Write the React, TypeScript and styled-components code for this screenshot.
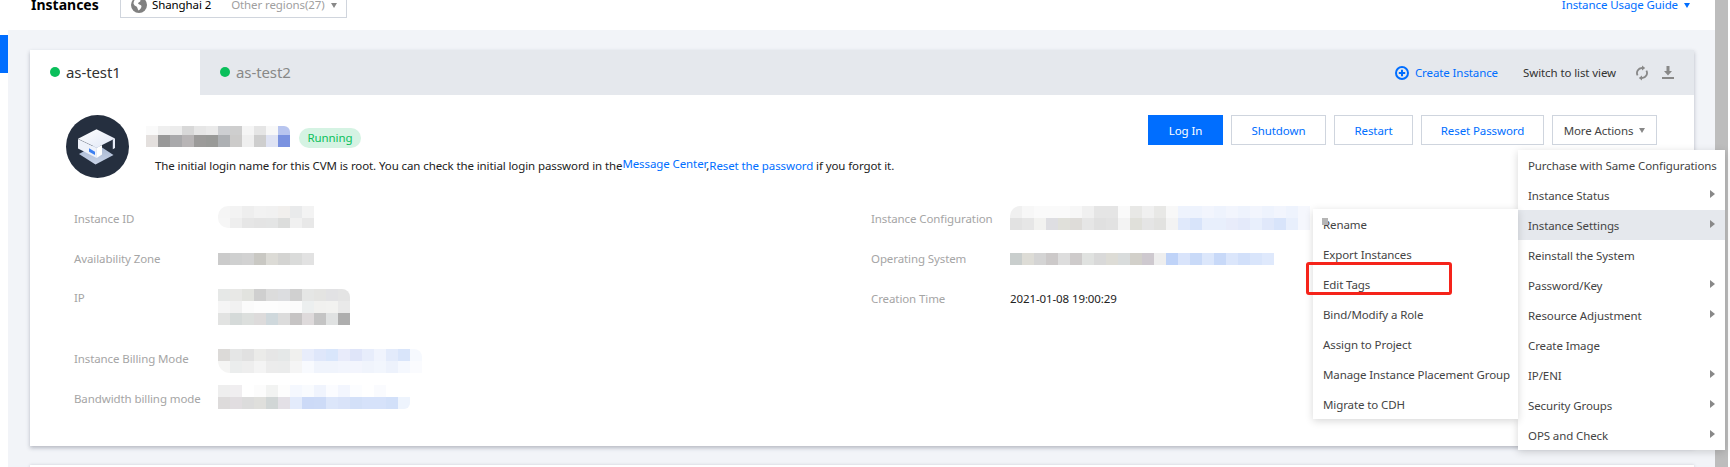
import React from 'react';
import styled, { createGlobalStyle } from 'styled-components';

const GlobalStyle = createGlobalStyle`
  html, body {
    margin: 0;
    padding: 0;
    background: #fff;
    overflow: hidden;
  }
  * {
    box-sizing: border-box;
  }
  body {
    font-family: "Noto Sans", "Open Sans", Arial, sans-serif;
    font-size: 11.5px;
    letter-spacing: -0.1px;
    color: #444;
  }
`;

const Page = styled.div`
  display: flex;
  width: 1730px;
  height: 467px;
  overflow: hidden;
  background: #fff;
`;

const Rail = styled.div`
  width: 8px;
  padding-top: 35px;
  flex-shrink: 0;
  background: #fff;
`;

const RailMarker = styled.div`
  height: 38px;
  background: #006eff;
`;

const Main = styled.div`
  width: 1707px;
  flex-shrink: 0;
  background: #f2f4f8;
`;

const ScrollBar = styled.div`
  width: 13px;
  flex-shrink: 0;
  background: #bdbdbd;
`;

const Header = styled.div`
  height: 30px;
  display: flex;
  align-items: flex-end;
  padding: 0 25px 11px 23px;
  background: #fff;
  overflow: hidden;
`;

const PageTitle = styled.div`
  width: 69px;
  font-size: 14px;
  font-weight: 700;
  letter-spacing: 0;
  line-height: 20px;
  color: #000;
  margin-bottom: 4px;
`;

const RegionBox = styled.div`
  width: 227px;
  height: 30px;
  margin-left: 20px;
  margin-bottom: 1px;
  padding: 4px 0 0 10px;
  display: flex;
  align-items: center;
  flex-shrink: 0;
  border: 1px solid #d0d5dd;
  line-height: 18px;
  white-space: nowrap;
`;

const RegionCurrent = styled.span`
  color: #000;
  margin-left: 5px;
`;

const RegionOther = styled.span`
  color: #a0a0a0;
  margin-left: 20px;
`;

const Caret = styled.span<{ $color?: string; $gap?: number }>`
  display: inline-block;
  width: 0;
  height: 0;
  margin-left: ${p => p.$gap ?? 6}px;
  border-left: 3.5px solid transparent;
  border-right: 3.5px solid transparent;
  border-top: 5px solid ${p => p.$color ?? '#888'};
`;

const GuideLink = styled.div`
  margin-left: auto;
  margin-bottom: 4px;
  display: flex;
  align-items: center;
  line-height: 20px;
  color: #006eff;
`;

const Content = styled.div`
  padding: 20px 21px 0 22px;
`;

const Card = styled.div`
  background: #fff;
  box-shadow: 0 2px 4px rgba(54, 58, 80, 0.32);
`;

const TabBar = styled.div`
  height: 45px;
  display: flex;
  align-items: center;
  padding-right: 20px;
  background: #e5e8ed;
`;

const Tab = styled.div<{ $active?: boolean }>`
  width: ${p => (p.$active ? '170px' : 'auto')};
  height: 45px;
  padding: 0 0 1px 20px;
  display: flex;
  align-items: center;
  gap: 6px;
  font-size: 15px;
  background: ${p => (p.$active ? '#fff' : 'transparent')};
  color: ${p => (p.$active ? '#333' : '#888')};
`;

const Dot = styled.span`
  width: 10px;
  height: 10px;
  border-radius: 50%;
  background: #0abf5b;
`;

const TabActions = styled.div`
  margin-left: auto;
  display: flex;
  align-items: center;
`;

const CreateLink = styled.span`
  display: flex;
  align-items: center;
  gap: 6px;
  color: #006eff;
`;

const SwitchLink = styled.span`
  margin-left: 25px;
  color: #333;
`;

const IconSlot = styled.span<{ $gap: number }>`
  display: flex;
  margin-left: ${p => p.$gap}px;
`;

const CardBody = styled.div`
  position: relative;
  height: 351px;
`;

const TopRow = styled.div`
  display: flex;
  justify-content: space-between;
  padding: 20px 37px 0 36px;
  height: 83px;
`;

const Identity = styled.div`
  display: flex;
  gap: 17px;
`;

const NameLine = styled.div`
  display: flex;
  align-items: center;
  gap: 9px;
  margin-top: 10px;
`;

const RunningPill = styled.span`
  width: 62px;
  height: 20px;
  margin-top: 3px;
  border-radius: 10px;
  background: #d5f3e3;
  color: #0abf5b;
  text-align: center;
  line-height: 20px;
`;

const LoginHint = styled.div`
  margin-top: 9px;
  padding-left: 9px;
  line-height: 18px;
  color: #222;
  white-space: nowrap;
`;

const HintLink = styled.a<{ $raised?: boolean }>`
  color: #006eff;
  position: relative;
  top: ${p => (p.$raised ? '-2px' : '0')};
`;

const Buttons = styled.div`
  display: flex;
  gap: 8px;
`;

const Button = styled.button<{ $primary?: boolean; $width: number; $plain?: boolean }>`
  width: ${p => p.$width}px;
  height: 30px;
  padding: 0;
  font: inherit;
  letter-spacing: inherit;
  display: flex;
  align-items: center;
  justify-content: center;
  border: 1px solid ${p => (p.$primary ? '#006eff' : '#cfd5de')};
  background: ${p => (p.$primary ? '#006eff' : '#fff')};
  color: ${p => (p.$primary ? '#fff' : p.$plain ? '#444' : '#006eff')};
`;

const Details = styled.div`
  display: grid;
  grid-template-columns: 797px 1fr;
  padding: 21px 0 0 44px;
`;

const DetailRow = styled.div<{ $tall?: boolean }>`
  height: ${p => (p.$tall ? '60px' : '40px')};
  padding-top: ${p => (p.$tall ? '10px' : '0')};
  display: flex;
  align-items: ${p => (p.$tall ? 'flex-start' : 'center')};
`;

const DetailLabel = styled.div<{ $width: number }>`
  width: ${p => p.$width}px;
  flex-shrink: 0;
  line-height: 18px;
  color: #a5a5a5;
  white-space: nowrap;
`;

const DetailValue = styled.div`
  color: #222;
  line-height: 18px;
`;

const MosaicBox = styled.svg<{ $shift?: number; $radius?: string }>`
  display: block;
  flex-shrink: 0;
  margin-top: ${p => p.$shift ?? 0}px;
  border-radius: ${p => p.$radius ?? '0'};
`;

const ActionsMenu = styled.div`
  position: absolute;
  top: 55px;
  right: -31px;
  width: 207px;
  background: #fff;
  box-shadow: 0 2px 8px rgba(0, 0, 0, 0.16);
  z-index: 3;
`;

const SubMenu = styled.div`
  position: absolute;
  top: 59px;
  right: 100%;
  width: 205px;
  background: #fff;
  box-shadow: 0 2px 8px rgba(0, 0, 0, 0.16);
`;

const MenuItem = styled.div<{ $active?: boolean }>`
  height: 30px;
  padding: 0 10px;
  display: flex;
  align-items: center;
  justify-content: space-between;
  white-space: nowrap;
  color: #444;
  background: ${p => (p.$active ? '#e5e8ed' : 'transparent')};
`;

const MenuArrow = styled.span`
  width: 0;
  height: 0;
  margin-top: -3px;
  border-top: 4px solid transparent;
  border-bottom: 4px solid transparent;
  border-left: 5px solid #888;
`;

const RedMark = styled.div`
  position: absolute;
  top: 53px;
  left: -7px;
  width: 146px;
  height: 33px;
  border: 3px solid #f5231a;
  border-radius: 3px;
`;

const Smudge = styled.div`
  position: absolute;
  top: 9px;
  left: 9px;
  width: 6px;
  height: 7px;
  background: #b5b5b5;
`;

const NextCard = styled.div`
  height: 20px;
  margin-top: 19px;
  background: #fff;
  box-shadow: 0 0 3px rgba(54, 58, 80, 0.2);
`;

interface MosaicProps {
  rows: string[];
  heights: number[];
  shift?: number;
  radius?: string;
}

// the blurred-out values in the screenshot, one colour per 12px cell
const Mosaic = ({ rows, heights, shift, radius }: MosaicProps) => {
  const cells = rows.map(r => r.split(' '));
  const width = Math.max(...cells.map(r => r.length)) * 12;
  const height = heights.reduce((a, b) => a + b, 0);
  let y = 0;
  return (
    <MosaicBox $shift={shift} $radius={radius} width={width} height={height} shapeRendering="crispEdges">
      {cells.map((row, i) => {
        const top = y;
        y += heights[i];
        return row.map((c, j) => (
          <rect key={`${i}-${j}`} x={j * 12} y={top} width={12} height={heights[i]} fill={`#${c}`} />
        ));
      })}
    </MosaicBox>
  );
};

const Avatar = () => (
  <svg width="63" height="63" viewBox="0 0 63 63">
    <defs>
      <linearGradient id="topFace" x1="0" y1="0" x2="1" y2="1">
        <stop offset="0" stopColor="#ffffff" />
        <stop offset="1" stopColor="#dfe6f5" />
      </linearGradient>
      <linearGradient id="floorFace" x1="0" y1="0" x2="0" y2="1">
        <stop offset="0" stopColor="#a3b2cd" />
        <stop offset="1" stopColor="#c9d4e8" />
      </linearGradient>
    </defs>
    <circle cx="31.5" cy="31.5" r="31.5" fill="#252f3f" />
    <polygon points="13,39 30.7,29 47.5,40 29.5,49.5" fill="url(#floorFace)" />
    <polygon points="12,24 30.7,33 30.7,43 12,33.5" fill="#eef2fa" />
    <polygon points="30.7,33 36,30 36,39.5 30.7,43" fill="#ffffff" />
    <polygon points="46.8,24.5 49,23.5 49,33 46.8,34.2" fill="#e7ecf7" />
    <polygon points="30.5,14.3 49,23.5 30.7,32.8 12,23.8" fill="url(#topFace)" />
    <polygon points="23,33.3 29,36.7 29,40 23,36.7" fill="#3d7ff0" />
  </svg>
);

const GlobeIcon = () => (
  <svg width="16" height="16" viewBox="0 0 16 16">
    <circle cx="8" cy="8" r="8" fill="#808080" />
    <path d="M4 2.5 C6 1.5 9 2 9.5 3.5 C9.5 5 7.5 5 7 6.5 C8 8 10 7.5 10.5 9 C10.5 11 9 13 7.5 13.5 C6.5 12 6.5 10.5 5.5 9.5 C4 9 3 8 2.5 6.5 C2.5 5 3 3.5 4 2.5 Z" fill="#fff" />
  </svg>
);

const PlusCircleIcon = () => (
  <svg width="14" height="14" viewBox="0 0 14 14">
    <circle cx="7" cy="7" r="6" fill="none" stroke="#006eff" strokeWidth="2" />
    <path d="M7 3.8V10.2M3.8 7H10.2" stroke="#006eff" strokeWidth="2" />
  </svg>
);

const RefreshIcon = () => (
  <svg width="12" height="16" viewBox="0 0 12 16">
    <path d="M6 3A5 5 0 0 0 1.6 10.4M6 13A5 5 0 0 0 10.4 5.6" fill="none" stroke="#888" strokeWidth="1.8" />
    <polygon points="6,0.5 9.2,3 6,5.5" fill="#888" />
    <polygon points="6,10.5 2.8,13 6,15.5" fill="#888" />
  </svg>
);

const DownloadIcon = () => (
  <svg width="12" height="13" viewBox="0 0 12 13">
    <rect x="4.5" y="0" width="3" height="5.5" fill="#888" />
    <polygon points="2,5 10,5 6,9.5" fill="#888" />
    <rect x="0" y="11" width="12" height="2" fill="#888" />
  </svg>
);

const settingsItems = [
  'Rename',
  'Export Instances',
  'Edit Tags',
  'Bind/Modify a Role',
  'Assign to Project',
  'Manage Instance Placement Group',
  'Migrate to CDH',
];

const actionItems: { label: string; more?: boolean }[] = [
  { label: 'Purchase with Same Configurations' },
  { label: 'Instance Status', more: true },
  { label: 'Instance Settings', more: true },
  { label: 'Reinstall the System' },
  { label: 'Password/Key', more: true },
  { label: 'Resource Adjustment', more: true },
  { label: 'Create Image' },
  { label: 'IP/ENI', more: true },
  { label: 'Security Groups', more: true },
  { label: 'OPS and Check', more: true },
];

const App = () => {
  return (
    <Page>
      <GlobalStyle />
      <Rail>
        <RailMarker />
      </Rail>
      <Main>
        <Header>
          <PageTitle>Instances</PageTitle>
          <RegionBox>
            <GlobeIcon />
            <RegionCurrent>Shanghai 2</RegionCurrent>
            <RegionOther>Other regions(27)</RegionOther>
            <Caret $gap={6} />
          </RegionBox>
          <GuideLink>
            Instance Usage Guide
            <Caret $color="#006eff" />
          </GuideLink>
        </Header>
        <Content>
          <Card>
            <TabBar>
              <Tab $active>
                <Dot />
                as-test1
              </Tab>
              <Tab>
                <Dot />
                as-test2
              </Tab>
              <TabActions>
                <CreateLink>
                  <PlusCircleIcon />
                  Create Instance
                </CreateLink>
                <SwitchLink>Switch to list view</SwitchLink>
                <IconSlot $gap={20}>
                  <RefreshIcon />
                </IconSlot>
                <IconSlot $gap={14}>
                  <DownloadIcon />
                </IconSlot>
              </TabActions>
            </TabBar>
            <CardBody>
              <TopRow>
                <Identity>
                  <Avatar />
                  <div>
                    <NameLine>
                      <Mosaic
                        radius="0 6px 0 0"
                        heights={[9, 12]}
                        rows={[
                          'fafafa efefef ececec d8d8d8 e6e6e6 eaeaea cdcfd2 cecece f5f5f5 e5e5e5 f8f8f8 b8c5ef',
                          'e4e0de 999999 a9a9ab b8b5b6 9c9b9a 999a98 adb0b3 cccbca efefef cecece dfe3f3 7a92e0',
                        ]}
                      />
                      <RunningPill>Running</RunningPill>
                    </NameLine>
                    <LoginHint>
                      The initial login name for this CVM is root. You can check the initial login password in the
                      <HintLink $raised>Message Center</HintLink>,<HintLink>Reset the password</HintLink> if you forgot it.
                    </LoginHint>
                  </div>
                </Identity>
                <Buttons>
                  <Button $primary $width={75}>Log In</Button>
                  <Button $width={95}>Shutdown</Button>
                  <Button $width={79}>Restart</Button>
                  <Button $width={123}>Reset Password</Button>
                  <Button $plain $width={105}>
                    More Actions
                    <Caret />
                  </Button>
                </Buttons>
              </TopRow>
              <Details>
                <div>
                  <DetailRow>
                    <DetailLabel $width={144}>Instance ID</DetailLabel>
                    <Mosaic
                      shift={-4}
                      radius="10px 0 0 10px"
                      heights={[12, 10]}
                      rows={[
                        'f5f5f5 f3f3f3 eeeeee f2f2f2 f1f1f1 f1efed e9eaeb f3f3f3',
                        'f6f6f6 eeeeee e6e6e6 e4e4e4 e4e5e5 dcdddc f0f0f0 e8e8e8',
                      ]}
                    />
                  </DetailRow>
                  <DetailRow>
                    <DetailLabel $width={144}>Availability Zone</DetailLabel>
                    <Mosaic heights={[12]} rows={['cbcbcb cfd0d0 d2d2d2 c9c8c3 dcdbd6 d4d4d2 dadbda e2e2e2']} />
                  </DetailRow>
                  <DetailRow $tall>
                    <DetailLabel $width={144}>IP</DetailLabel>
                    <Mosaic
                      radius="0 8px 0 0"
                      heights={[12, 12, 12]}
                      rows={[
                        'e6e8e7 e8e8e6 e2e3df cfcfcf dcdcdc dcdde0 d0d0d0 e5e6e5 e4e4e2 e2e2e4 e4e4e4',
                        'f5f5f5 f1f1f1 fbfbfb fdfdfd fdfdfd fcfcfc fbfbfb ecefef f1f1ef f2f2f0 e9e9e9',
                        'e2e3e2 d5dad9 dcdfdd dddbdb cfd8dc dcdcdc c6c4c4 dedadb c4c4c4 e0e2e2 aeaeae',
                      ]}
                    />
                  </DetailRow>
                  <DetailRow>
                    <DetailLabel $width={144}>Instance Billing Mode</DetailLabel>
                    <Mosaic
                      shift={4}
                      radius="0 8px 0 12px"
                      heights={[12, 12]}
                      rows={[
                        'dcdad8 e5e6e6 e1e1e1 ebebe9 e6e6e6 e5e8e8 f0f0ee e8edfb dfe7fa d9e6fb e8ebfa dfe5f9 e7edfb f0f4fd e3ebfb d9e5fa f6f9fe',
                        'f5f5f4 ebeded eeeeee f4f4f4 ececec ebecec f5f5f5 f8fafe f0f4fc f0f4fc f2f5fd f3f5fd f0f4fc f2f6fd edf2fc f5f8fe fafbfe',
                      ]}
                    />
                  </DetailRow>
                  <DetailRow>
                    <DetailLabel $width={144}>Bandwidth billing mode</DetailLabel>
                    <Mosaic
                      shift={-4}
                      radius="0 0 6px 0"
                      heights={[12, 12]}
                      rows={[
                        'eeeeee f0eef0 ffffff fcfcfc f2f3f2 fdfdfd f5f8fe f9fbfe f0f4fd fbfcff f3f6fe fcfdff ffffff fafbfe ffffff ffffff',
                        'dddbdb e1dde0 dcdcdc dfdfdc d1d6d6 e3e0e6 e3ebfb ccdaf7 cddbf7 dce6fa d9e3f9 d3e0f8 d6e2fa d6e2fa d2e0f9 eef4fd',
                      ]}
                    />
                  </DetailRow>
                </div>
                <div>
                  <DetailRow>
                    <DetailLabel $width={139}>Instance Configuration</DetailLabel>
                    <Mosaic
                      shift={-2}
                      radius="10px 0 0 0"
                      heights={[12, 12]}
                      rows={[
                        'f0f0f0 f7f7f7 fafafa fafafa fafafa f7f7f7 f0f0f0 e5e5e5 e5e5e5 fafafa e8e8e6 f0f0f0 e8e8e6 f8f8f8 eef3fd eef3fd f2f5fd eef3fd f2f5fd eef3fd f2f5fd eef3fd f2f5fd eef3fd f5f7fd',
                        'e2e2e2 e6e6e6 f2f2f0 dedee2 e0e0da dedcd9 e6e6e6 e0e0e0 e2e2e2 f3f3f3 e0e0da e5e5e5 e2e2e0 f3f3f3 e0e9fb d8e4fa e8effc e8effc e8ecfa e4eafa e8effc e0e8fa d8e4fa e8effc f5f7fd',
                      ]}
                    />
                  </DetailRow>
                  <DetailRow>
                    <DetailLabel $width={139}>Operating System</DetailLabel>
                    <Mosaic
                      heights={[12]}
                      rows={['c9cecd dddcd6 d4d4d4 ccc9c9 dddddd cecbcb e0e2e0 d9d9d9 dddcd6 d9dcdc d2d0ca cec9cf eeeeee bfd3f8 d9e4fb c9daf8 dce7fb c8d9f8 dbe6fb d2e0fa d9e5fb dfe9fc']}
                    />
                  </DetailRow>
                  <DetailRow>
                    <DetailLabel $width={139}>Creation Time</DetailLabel>
                    <DetailValue>2021-01-08 19:00:29</DetailValue>
                  </DetailRow>
                </div>
              </Details>
              <ActionsMenu>
                {actionItems.map(item => (
                  <MenuItem key={item.label} $active={item.label === 'Instance Settings'}>
                    {item.label}
                    {item.more && <MenuArrow />}
                  </MenuItem>
                ))}
                <SubMenu>
                  {settingsItems.map(label => (
                    <MenuItem key={label}>{label}</MenuItem>
                  ))}
                  <Smudge />
                  <RedMark />
                </SubMenu>
              </ActionsMenu>
            </CardBody>
          </Card>
          <NextCard />
        </Content>
      </Main>
      <ScrollBar />
    </Page>
  );
};

export default App;
